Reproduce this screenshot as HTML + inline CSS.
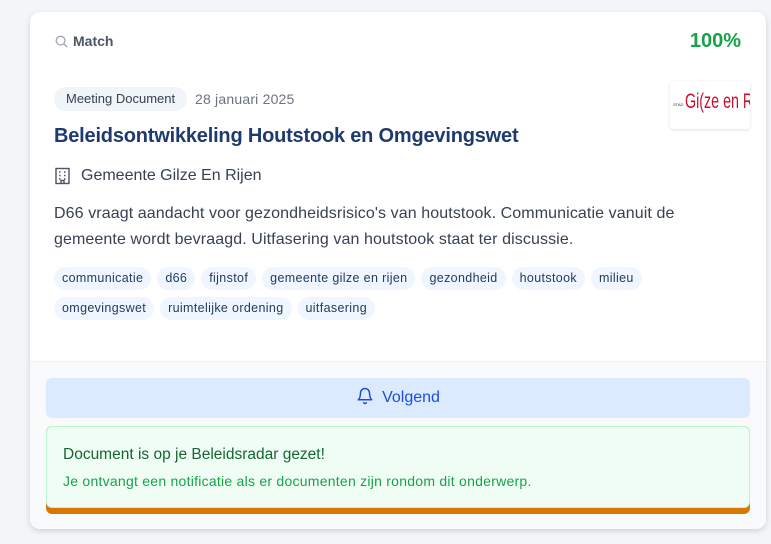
<!DOCTYPE html>
<html><head><meta charset="utf-8"><style>
*{box-sizing:border-box;margin:0;padding:0}
body{width:771px;height:544px;background:#f3f5f8;font-family:"Liberation Sans",sans-serif;position:relative;overflow:hidden}
.card{position:absolute;left:30px;top:12px;width:736px;height:517px;background:#fff;border-radius:10px;box-shadow:0 2px 6px rgba(0,0,0,.15);overflow:hidden}
.foot{position:absolute;left:0;top:349px;width:100%;height:168px;background:#f9fafb;border-top:1px solid #eef0f3}
.abs{position:absolute}
.tag{display:inline-block;height:23px;line-height:23px;padding:0 8px;border-radius:12px;background:#eff6ff;color:#1e3a5f;font-size:12.5px;letter-spacing:.35px;margin-right:6px;margin-bottom:7px}
</style></head><body>
<div class="card">
 <svg class="abs" style="left:24px;top:22px" width="15" height="15" viewBox="0 0 24 24" fill="none" stroke="#9ca3af" stroke-width="2"><circle cx="10.5" cy="10.5" r="7"/><path d="M16 16l5 5"/></svg>
 <div class="abs" style="left:43px;top:21px;font-size:14px;font-weight:bold;color:#4b5563">Match</div>
 <div class="abs" style="right:25px;top:18px;font-size:20px;font-weight:bold;color:#16a34a">100%</div>
 <div class="abs" style="left:24px;top:75px;height:24px;line-height:24px;padding:0 12px;border-radius:12px;background:#f1f4f8;color:#374151;font-size:13px">Meeting Document</div>
 <div class="abs" style="left:165px;top:79px;font-size:14px;color:#6b7280;letter-spacing:.2px">28 januari 2025</div>
 <div class="abs" style="left:640px;top:69px;width:80px;height:48px;background:#fff;border-radius:4px;box-shadow:0 1px 3px rgba(0,0,0,.12);overflow:hidden">
  <div class="abs" style="left:3px;top:21px;font-size:4px;color:#333">STAD</div>
  <div class="abs" style="left:15px;top:9px;font-size:21px;color:#c8102e;white-space:nowrap;transform:scaleX(.68);transform-origin:left top">Gi(ze en Rij</div>
 </div>
 <div class="abs" style="left:24px;top:113px;font-size:20px;font-weight:bold;color:#1e3a6e;letter-spacing:-.2px">Beleidsontwikkeling Houtstook en Omgevingswet</div>
 <svg class="abs" style="left:24px;top:155px" width="17" height="18" viewBox="0 0 17 18" fill="none" stroke="#4b5563" stroke-width="1.4"><rect x="2" y="1.5" width="13" height="15"/><path d="M5 5h1.5M10 5h1.5M5 8.5h1.5M10 8.5h1.5M5 12h1.5M10 12h1.5M7 16.5v-3h3v3"/></svg>
 <div class="abs" style="left:51px;top:155px;font-size:16px;color:#374151">Gemeente Gilze En Rijen</div>
 <div class="abs" style="left:24px;top:189px;width:650px;font-size:16px;line-height:26px;color:#374151;letter-spacing:.1px">D66 vraagt aandacht voor gezondheidsrisico's van houtstook. Communicatie vanuit de gemeente wordt bevraagd. Uitfasering van houtstook staat ter discussie.</div>
 <div class="abs" style="left:24px;top:255px;width:700px">
  <span class="tag">communicatie</span><span class="tag">d66</span><span class="tag">fijnstof</span><span class="tag">gemeente gilze en rijen</span><span class="tag">gezondheid</span><span class="tag">houtstook</span><span class="tag">milieu</span><br><span class="tag">omgevingswet</span><span class="tag">ruimtelijke ordening</span><span class="tag">uitfasering</span>
 </div>
 <div class="foot">
  <div class="abs" style="left:16px;top:16px;width:704px;height:40px;background:#dbeafe;border-radius:6px;text-align:center;line-height:40px;font-size:16px;color:#1d4ed8">
   <svg style="vertical-align:-3px;margin-right:8px" width="18" height="18" viewBox="0 0 24 24" fill="none" stroke="#1d4ed8" stroke-width="2" stroke-linecap="round" stroke-linejoin="round"><path d="M6 8a6 6 0 0 1 12 0c0 7 3 9 3 9H3s3-2 3-9"/><path d="M10.3 21a1.94 1.94 0 0 0 3.4 0"/></svg>Volgend</div>
  <div class="abs" style="left:16px;top:64px;width:704px;height:88px;background:#d97706;border-radius:6px">
   <div style="height:82px;background:#f0fdf4;border:1px solid #bbf7d0;border-radius:6px;padding:19px 0 0 16px">
    <div style="font-size:15.5px;color:#166534">Document is op je Beleidsradar gezet!</div>
    <div style="font-size:14px;color:#16a34a;margin-top:9px;letter-spacing:.25px">Je ontvangt een notificatie als er documenten zijn rondom dit onderwerp.</div>
   </div>
  </div>
 </div>
</div>
</body></html>
